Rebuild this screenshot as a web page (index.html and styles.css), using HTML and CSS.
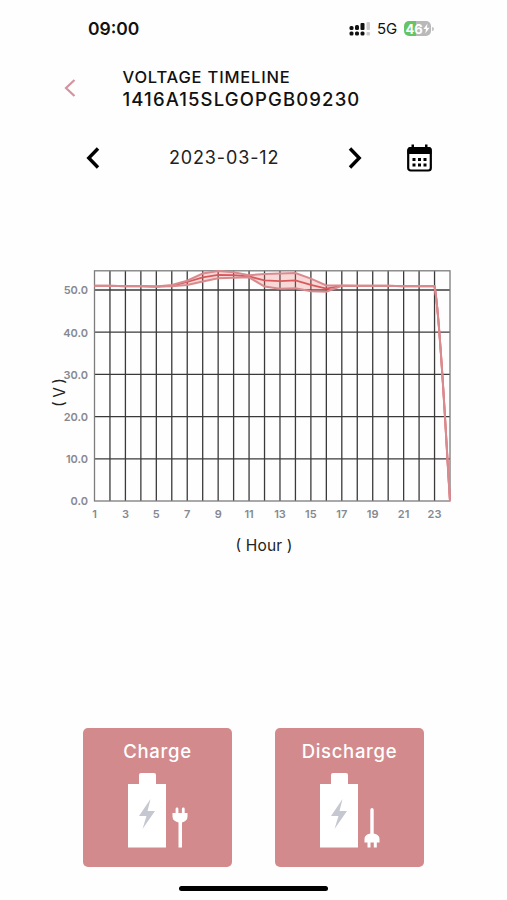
FILE: index.html
```
<!DOCTYPE html>
<html lang="en">
<head>
    <meta charset="UTF-8">
    <meta name="viewport" content="width=device-width, initial-scale=1.0">
    <title>Voltage Timeline</title>
    <link rel="stylesheet" href="styles.css">
</head>
<body>
    <div class="status-bar">
        <span class="clock">09:00</span>
        <svg class="signal" width="22" height="14" viewBox="0 0 22 14">
            <g fill="#111">
                <rect x="0.5" y="4" width="4" height="4" rx="1.5"/>
                <rect x="6" y="3" width="4" height="5" rx="1.5"/>
                <rect x="11.5" y="1" width="4" height="7" rx="1"/>
                <rect x="0.5" y="9.5" width="4" height="4" rx="1.5"/>
                <rect x="6" y="9.5" width="4" height="4" rx="1.5"/>
                <rect x="11.5" y="9.5" width="4" height="4" rx="1.5"/>
            </g>
            <rect x="17.5" y="0" width="3.5" height="8" rx="1" fill="#ccc"/>
            <rect x="17.5" y="10" width="3.5" height="3.5" rx="1" fill="#ccc"/>
        </svg>
        <span class="network">5G</span>
        <div class="battery-level">46<svg width="7" height="11" viewBox="0 0 7 11"><path d="M4.5 0.5 0.5 6h2.6L2.3 10.5 6.5 4.8H3.9z" fill="#fff"/></svg></div>
        <span class="battery-tip"></span>
    </div>

    <div class="header">
        <svg class="back" width="12" height="20" viewBox="0 0 12 20">
            <path d="M10.5 2 2 10l8.5 8" fill="none" stroke="#d493a0" stroke-width="2.2"/>
        </svg>
        <div class="titles">
            <div class="title">VOLTAGE TIMELINE</div>
            <div class="serial">1416A15SLGOPGB09230</div>
        </div>
    </div>

    <div class="date-row">
        <svg class="prev" width="14" height="22" viewBox="0 0 14 22">
            <path d="M12 1.5 2.8 11l9.2 9.5" fill="none" stroke="#000" stroke-width="3.4"/>
        </svg>
        <span class="date">2023-03-12</span>
        <svg class="next" width="14" height="22" viewBox="0 0 14 22">
            <path d="M2 1.5 11.2 11 2 20.5" fill="none" stroke="#000" stroke-width="3.4"/>
        </svg>
        <svg class="calendar" width="25" height="28" viewBox="0 0 25 28">
            <rect x="1.2" y="4.2" width="22.6" height="22.3" rx="2.5" fill="#fff" stroke="#000" stroke-width="2.2"/>
            <path d="M0.5 10V5.5Q0.5 3 3 3h19Q24.5 3 24.5 5.5V10z"/>
            <path d="M4.5 0.5H7V5H4.5zM18 0.5h2.5V5H18z"/>
            <path d="M5.5 14h3v3h-3zM11 14h3v3h-3zM16.5 14h3v3h-3zM5.5 19.5h3v3h-3zM11 19.5h3v3h-3zM16.5 19.5h3v3h-3z"/>
        </svg>
    </div>

    <svg class="chart" id="chart" width="507" height="305" viewBox="0 255 507 305">
        <g id="grid"></g>
        <g id="series"></g>
        <text class="unit" x="-392.5" y="65" textLength="29" transform="rotate(-90)">( V )</text>
        <text class="unit" x="264" y="551" textLength="57">( Hour )</text>
    </svg>

    <div class="actions">
        <button class="action">
            <span class="action-label">Charge</span>
            <svg width="149" height="80" viewBox="0 0 149 80">
                <path d="M45 16h11V7q0-2 2-2h13q2 0 2 2v9h10v63.5H45z" fill="#fff"/>
                <path d="M67.5 31 56 48h7.5l-4 13L72 43h-7.5z" fill="#c5c7d1"/>
                <path d="M89.5 45h15v3.5q0 4.5-5.5 6v25h-3.5v-25q-6-1.5-6-6z" fill="#fff"/>
                <path d="M94 46v-5M100.300 46v-5" stroke="#fff" stroke-width="2.8" stroke-linecap="round"/>
            </svg>
        </button>
        <button class="action">
            <span class="action-label">Discharge</span>
            <svg width="149" height="80" viewBox="0 0 149 80">
                <path d="M45 16h11V7q0-2 2-2h13q2 0 2 2v9h10v63.5H45z" fill="#fff"/>
                <path d="M67.5 31 56 48h7.5l-4 13L72 43h-7.5z" fill="#c5c7d1"/>
                <path d="M95.3 65.5V42q0-2 1.700-2t1.700 2v23.5q5.8 1 5.8 5.500v3.500h-15V71q0-4.500 5.800-5.500z" fill="#fff"/>
                <path d="M94 73v6.500M100.300 73v6.500" stroke="#fff" stroke-width="3"/>
            </svg>
        </button>
    </div>

    <div class="home-indicator"></div>

    <script src="chart.js"></script>
</body>
</html>
```
FILE: styles.css
```
body {
    font-family: Inter, sans-serif;
    margin: 0;
    height: 900px;
    background-color: #fefefe;
    color: #111;
    overflow: hidden;
}
.status-bar {
    display: flex;
    align-items: center;
    height: 57px;
    padding-left: 88px;
}
.clock {
    width: 261px;
    font-size: 17.5px;
    font-weight: 600;
}
.signal {
    margin-right: 6px;
}
.network {
    width: 27px;
    font-size: 15px;
    font-weight: 400;
}
.battery-level {
    display: flex;
    align-items: center;
    justify-content: center;
    width: 27px;
    height: 15px;
    border-radius: 5px;
    background: linear-gradient(90deg, #65c466 46%, #b9b9b9 46%);
    color: #fff;
    font-size: 13px;
    font-weight: 700;
}
.battery-tip {
    width: 2px;
    height: 4px;
    margin-left: 1px;
    border-radius: 0 2px 2px 0;
    background: #c4c4c4;
}
.header {
    display: flex;
    align-items: center;
    height: 61px;
    padding-left: 64px;
}
.titles {
    margin-left: 46.5px;
    white-space: nowrap;
}
.title {
    font-size: 16.5px;
    line-height: 22px;
    font-weight: 500;
    letter-spacing: 0.8px;
}
.serial {
    font-size: 18.5px;
    line-height: 22px;
    font-weight: 500;
    letter-spacing: 1.13px;
}
.date-row {
    display: flex;
    align-items: center;
    height: 79px;
    padding-left: 86px;
}
.date {
    width: 179px;
    margin-left: 69px;
    font-size: 18px;
    letter-spacing: 0.85px;
    color: #222;
}
.calendar {
    margin-left: 45px;
}
.chart {
    display: block;
    margin-top: 58px;
}
.grid-line {
    stroke: #3a3a3a;
    stroke-width: 1.3;
}
.frame {
    fill: none;
    stroke: #7c7c7c;
    stroke-width: 1.3;
}
.tick {
    font-size: 11px;
    font-weight: 600;
    fill: #868991;
}
.unit {
    font-size: 15.5px;
    text-anchor: middle;
    fill: #222;
}
.range {
    fill: #ee7777;
    fill-opacity: 0.28;
}
.limit {
    fill: none;
    stroke: #d98a8f;
    stroke-width: 2;
}
.mean {
    fill: none;
    stroke: #d9595b;
    stroke-width: 1.8;
}
.actions {
    display: flex;
    gap: 43px;
    margin: 168px 0 0 83px;
}
.action {
    display: flex;
    flex-direction: column;
    align-items: center;
    width: 149px;
    height: 139px;
    padding: 11px 0 0;
    border: none;
    border-radius: 5px;
    background: #d38a8c;
    color: #fff;
    font-family: inherit;
    cursor: pointer;
}
.action-label {
    height: 29px;
    font-size: 18.5px;
    line-height: 24px;
    font-weight: 500;
    letter-spacing: 0.7px;
}
.home-indicator {
    width: 149px;
    height: 5px;
    margin: 19px 0 0 179px;
    border-radius: 3px;
    background: #000;
}
```
FILE: chart.js
```
const left = 94.5;
const right = 450;
const bottom = 501;
const top50 = 290;
const frameTop = 270.8;

const mean = [51, 51, 50.9, 50.9, 50.8, 51, 51.9, 53, 53.6, 53.5, 53.2, 52.3, 52.1, 52.3, 51.2, 50.3, 51, 51, 51, 51, 50.9, 50.9, 50.9, 0];
const high = [51, 51, 50.9, 50.9, 50.8, 51.2, 52.2, 53.9, 54.5, 54.2, 53.5, 53.8, 53.9, 54, 52.7, 51.1, 51.1, 51, 51, 51, 50.9, 50.9, 50.9, 0];
const low = [51, 51, 50.9, 50.9, 50.8, 50.9, 51.2, 52, 52.8, 52.9, 53, 50.8, 50.3, 50.4, 49.7, 49.6, 51, 51, 51, 51, 50.9, 50.9, 50.9, 0];

const xOf = hour => left + (hour - 1) * (right - left) / 23;
const yOf = volt => bottom - volt * (bottom - top50) / 50;
const points = data => data.map((v, i) => xOf(i + 1).toFixed(1) + ',' + yOf(v).toFixed(1));

let grid = '';
for (let h = 1; h <= 24; h++) {
    if (h > 1 && h < 24) {
        grid += `<line class="grid-line" x1="${xOf(h)}" x2="${xOf(h)}" y1="${frameTop}" y2="${bottom}"/>`;
    }
    if (h % 2 === 1) {
        grid += `<text class="tick" text-anchor="middle" x="${xOf(h)}" y="518">${h}</text>`;
    }
}
for (let v = 0; v <= 50; v += 10) {
    if (v > 0) {
        grid += `<line class="grid-line" x1="${left}" x2="${right}" y1="${yOf(v)}" y2="${yOf(v)}"/>`;
    }
    grid += `<text class="tick" text-anchor="end" x="88" y="${yOf(v) + 4.3}">${v.toFixed(1)}</text>`;
}
grid += `<rect class="frame" x="${left}" y="${frameTop}" width="${right - left}" height="${bottom - frameTop}"/>`;
document.getElementById('grid').innerHTML = grid;

// the last hour falls off with a slight curve
const line = data => 'M' + points(data.slice(0, 23)).join('L') + 'C440,312 446,440 450,501';
document.getElementById('series').innerHTML =
    `<polygon class="range" points="${points(high.slice(0, 23)).concat(points(low.slice(0, 23)).reverse()).join(' ')}"/>` +
    `<path class="mean" d="${line(mean)}"/>` +
    `<path class="limit" d="${line(high)}"/>` +
    `<path class="limit" d="${line(low)}"/>`;
```
